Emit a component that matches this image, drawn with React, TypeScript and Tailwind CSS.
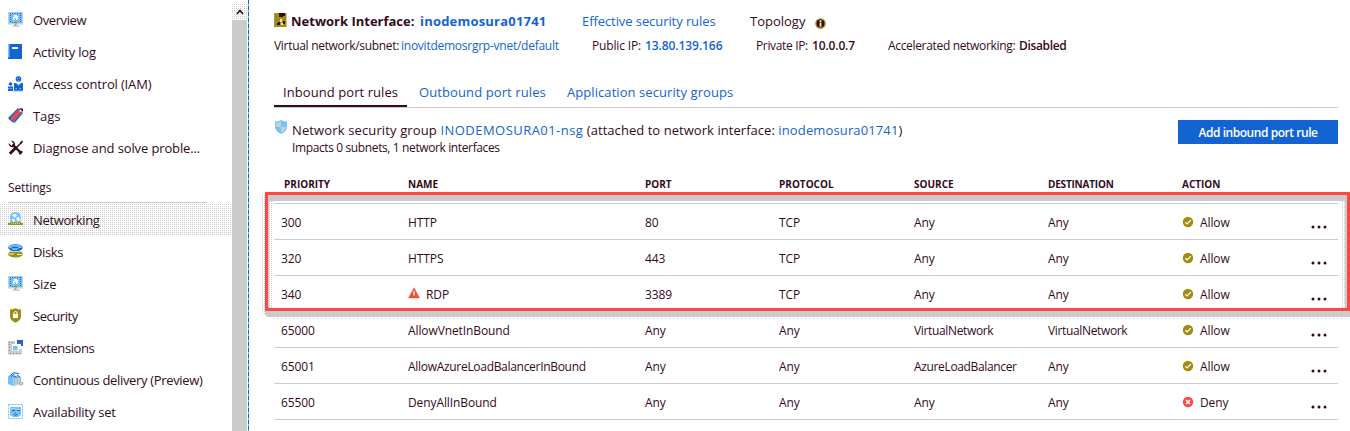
import type { ReactNode } from "react";

const BLUE = "#1264d3";
const SKY = "#70c4fb";
const OLIVE = "#a18c14";
const GREY = "#cccccc";
const INK = "#330a1c";
const RED = "#fb4a42";

function Glyph({ children, className = "" }: { children: ReactNode; className?: string }) {
  return (
    <svg viewBox="0 0 16 16" className={`h-4 w-4 shrink-0 ${className}`} fill="none">
      {children}
    </svg>
  );
}

function MonitorIcon() {
  return (
    <Glyph>
      <path d="M0 0h15v12.500H9.500v1h2V15h-7v-1.500h2v-1H0z" fill={GREY} />
      <path d="M1 1h13v10H1z" fill={SKY} />
      <path d="M2.500 1v10M12.500 1v10" stroke={BLUE} strokeDasharray="1 1" />
      <path d="M4 10.500h4M4 1.500h8" stroke={BLUE} strokeDasharray="1 1.5" />
      <path d="M6 3h3v1h1v3H9v1H8V6H6.500v2H5V5h1z" fill="#fff" />
      <path d="M7 9.500h2v2H8v2H6.500v-1H8v-1H7z" fill={OLIVE} />
    </Glyph>
  );
}

function BookIcon() {
  return (
    <Glyph>
      <path d="M1 0h13v15H0V13h1z" fill={BLUE} />
      <path d="M4 3h6v2H4z" fill="#fff" />
      <path d="M0 0h1.500v13.500H0z" fill={SKY} />
    </Glyph>
  );
}

function PeopleIcon() {
  return (
    <Glyph>
      <circle cx="10.5" cy="3" r="2.8" fill={BLUE} />
      <path d="M9 2h1v1H9zM11 2h1v1h-1zM10 4h1v1h-1z" fill={SKY} />
      <circle cx="2.500" cy="8" r="1.8" fill={BLUE} />
      <path d="M0 10.500h5V15H0z" fill={BLUE} />
      <path d="M6 7h2l2.500 2L13 7h2v8H6z" fill={BLUE} />
      <path d="M8 7.200l2.500 2.300L13 7.200M7.500 12.500h2M11.500 12.500h2M0 12.500h5" stroke={SKY} strokeDasharray="1.5 1" />
      <path d="M5 15h10" stroke={SKY} />
    </Glyph>
  );
}

function TagIcon() {
  return (
    <Glyph>
      <path d="M0.500 9.500L9.500 .5h5v5L7 14.500H5L.5 11z" fill={BLUE} />
      <path d="M1.500 10.500L10 1.500h3.500v3L6 13.500z" fill={RED} />
      <path d="M3 9l5 4M5 7l5 4M7 5l5 4M9 3l4 4M2 11L11 2M5 12l8-8" stroke={BLUE} strokeWidth=".8" strokeDasharray="1 1.3" />
      <circle cx="12.500" cy="3" r="1" fill="#fff" />
      <path d="M12.800.8l1.700.2v2" stroke={INK} />
    </Glyph>
  );
}

function ToolsIcon() {
  return (
    <Glyph>
      <path d="M4.500 4.500L13 13" stroke={INK} strokeWidth="2.4" />
      <path d="M0.700 3.100L3.300 5.700H5.600V3.400L3 .8A3.800 3.800 0 0 1 7 5.500L5 7.300A3.800 3.800 0 0 1 .7 3.100z" fill={INK} />
      <path d="M15 12l-3 3-1.500-2 2.500-2.500z" fill={INK} />
      <path d="M1.800 13.700l7-7" stroke={INK} strokeWidth="2.800" />
      <path d="M9 7l4.500-4.500" stroke={INK} strokeWidth="1.400" />
      <path d="M12 2.500l2-2 1.200 1-2 2.300z" fill={INK} />
    </Glyph>
  );
}

function GlobeIcon() {
  return (
    <Glyph>
      <circle cx="7.500" cy="5.500" r="5.500" fill={SKY} />
      <path d="M4 3.500l3-2 2 2-2 2zM8 6.500l3-2 1 3-2 2zM4 7.500l2-1 1 3H5z" fill="#fff" />
      <path d="M2 9.500h2v1h7v-1h2v1.500h2v2H0v-2h2z" fill={OLIVE} />
      <path d="M3 11.500h10" stroke="#e3d98b" strokeDasharray="1 1" />
    </Glyph>
  );
}

function DisksIcon() {
  return (
    <Glyph>
      <ellipse cx="7.500" cy="10" rx="7.400" ry="3.700" fill={OLIVE} />
      <path d="M1 10h5M9 10.500h5" stroke="#fff3ad" />
      <ellipse cx="7.500" cy="3.800" rx="7.300" ry="3.500" fill={BLUE} />
      <path d="M1 4.500V2.700L4 1h7l3 2v1h-3l-2 2H5L3 4z" fill={SKY} />
      <path d="M4 3.500h6" stroke={BLUE} strokeWidth="1.500" />
      <path d="M3 7.600h9" stroke="#fff" strokeWidth=".7" />
      <path d="M5 13.700h5" stroke={GREY} />
    </Glyph>
  );
}

function ShieldLockIcon() {
  return (
    <Glyph>
      <path d="M7.500.3Q10 1.500 13 1.500v6.700q0 4-5.500 6.600-5.500-2.600-5.500-6.600V1.500Q5 1.500 7.500.3z" fill={OLIVE} />
      <path d="M5 6h5v4H5z" fill="#fff" />
      <path d="M6 6.500V5a1.500 1.500 0 0 1 3 0v1.500" stroke="#fff" />
    </Glyph>
  );
}

function ExtensionsIcon() {
  return (
    <Glyph>
      <path d="M0 1h7v3H4v7h7V9h3v5.500H0z" fill={GREY} />
      <path d="M1.500 4v9M1 2.500h5M2 13.500h11" stroke={OLIVE} strokeDasharray="1 2" />
      <path d="M5 6h4.500v4.500H5z" fill={SKY} />
      <path d="M9 0h6v6h-2V4H9z" fill={BLUE} />
      <path d="M11 2h1v1h-1zM13 3h1v1h-1z" fill={RED} />
    </Glyph>
  );
}

function DeliveryIcon() {
  return (
    <Glyph>
      <path d="M0 4.500L5 3l8 2v7l-8 2-5-2z" fill={SKY} />
      <path d="M5 6h8v6l-8 2z" fill={GREY} />
      <path d="M1 4.500L5.500.7 11 1.500M3 4.500l4-3" stroke={BLUE} />
      <path d="M6.500 6v7M9.500 6v6M12.500 6v4" stroke={SKY} />
      <path d="M5.500 4l3 1.500M9 3l3 2" stroke={BLUE} />
      <circle cx="13" cy="11.500" r="1.800" fill={GREY} stroke={OLIVE} strokeDasharray="1 1.2" />
    </Glyph>
  );
}

function AvailabilityIcon() {
  return (
    <Glyph>
      <path d="M.5 .5h14v14H.5z" fill="#fff" stroke={SKY} strokeDasharray="2 1" />
      <path d="M2 3h11v8l-3 2H5l-3-2z" fill={SKY} />
      <path d="M3 4h4v1H3zM8.500 5h4v1h-4z" fill={GREY} />
      <path d="M4 6.500h3M9 6.500h3" stroke={BLUE} />
      <path d="M5.500 10.500q2 1.500 4 0" stroke={BLUE} />
      <path d="M7 8h1v2H7z" fill={OLIVE} />
    </Glyph>
  );
}

const topItems = [
  { icon: <MonitorIcon />, label: "Overview", track: "tracking-[-0.4px]" },
  { icon: <BookIcon />, label: "Activity log", track: "tracking-[-0.16px]" },
  { icon: <PeopleIcon />, label: "Access control (IAM)", track: "tracking-[-0.15px]" },
  { icon: <TagIcon />, label: "Tags", track: "tracking-[-0.1px]" },
  { icon: <ToolsIcon />, label: "Diagnose and solve proble...", track: "tracking-[-0.12px]" },
];

const settingsItems = [
  { icon: <GlobeIcon />, label: "Networking", track: "tracking-[-0.35px]", active: true },
  { icon: <DisksIcon />, label: "Disks", track: "tracking-[-0.35px]" },
  { icon: <MonitorIcon />, label: "Size", track: "tracking-[-0.1px]" },
  { icon: <ShieldLockIcon />, label: "Security", track: "tracking-[-0.45px]" },
  { icon: <ExtensionsIcon />, label: "Extensions", track: "tracking-[-0.4px]" },
  { icon: <DeliveryIcon />, label: "Continuous delivery (Preview)", track: "tracking-[-0.34px]" },
  { icon: <AvailabilityIcon />, label: "Availability set", track: "tracking-[-0.22px]" },
];

function NavItem({ icon, label, track, active }: { icon: ReactNode; label: string; track: string; active?: boolean }) {
  return (
    <li
      className={`flex h-8 items-center gap-[9px] pl-2 ${
        active
          ? "bg-[image:linear-gradient(90deg,transparent_1px,white_1px),linear-gradient(#cccccc_1px,white_1px)] bg-[size:2px_2px]"
          : ""
      }`}
    >
      {icon}
      <span className={`pt-0.5 text-[13px] ${track}`}>{label}</span>
    </li>
  );
}

function Sidebar() {
  return (
    <nav className="w-[232px] shrink-0 overflow-hidden pt-1">
      <ul>
        {topItems.map((item) => (
          <NavItem key={item.label} {...item} />
        ))}
      </ul>
      <div className="ml-2 flex h-[39px] w-[199px] items-center border-b border-[#cccccc] pt-[9px] text-[12px] tracking-[-0.15px]">
        Settings
      </div>
      <ul className="pt-px">
        {settingsItems.map((item) => (
          <NavItem key={item.label} {...item} />
        ))}
      </ul>
    </nav>
  );
}

function ScrollBar() {
  return (
    <div className="mr-px flex w-[15px] shrink-0 flex-col pt-1">
      <div className="flex h-4 items-center justify-center bg-[image:linear-gradient(90deg,transparent_1px,white_1px),linear-gradient(#cccccc_1px,white_1px)] bg-[size:2px_2px]">
        <svg viewBox="0 0 8 6" className="h-1.5 w-2" fill="none">
          <path d="M1 5l3-3.500L7 5" stroke={INK} strokeWidth="1.600" />
        </svg>
      </div>
      <div className="grow bg-[#cbcbcb]" />
    </div>
  );
}

type Rule = {
  priority: string;
  name: string;
  port: string;
  protocol: string;
  source: string;
  destination: string;
  allow: boolean;
  warn?: boolean;
};

const rules: Rule[] = [
  { priority: "300", name: "HTTP", port: "80", protocol: "TCP", source: "Any", destination: "Any", allow: true },
  { priority: "320", name: "HTTPS", port: "443", protocol: "TCP", source: "Any", destination: "Any", allow: true },
  { priority: "340", name: "RDP", port: "3389", protocol: "TCP", source: "Any", destination: "Any", allow: true, warn: true },
  { priority: "65000", name: "AllowVnetInBound", port: "Any", protocol: "Any", source: "VirtualNetwork", destination: "VirtualNetwork", allow: true },
  { priority: "65001", name: "AllowAzureLoadBalancerInBound", port: "Any", protocol: "Any", source: "AzureLoadBalancer", destination: "Any", allow: true },
  { priority: "65500", name: "DenyAllInBound", port: "Any", protocol: "Any", source: "Any", destination: "Any", allow: false },
];

const columns = "grid grid-cols-[134px_237px_134px_135px_134px_134px_156px] items-center";

function StatusIcon({ allow }: { allow: boolean }) {
  return (
    <svg viewBox="0 0 12 12" className="mb-0.5 h-3 w-3" fill="none">
      <circle cx="6" cy="6" r="5.200" fill={allow ? OLIVE : RED} />
      {allow ? (
        <path d="M3.300 6.200l1.900 1.800 3.600-3.800" stroke="#fff" strokeWidth="1.200" />
      ) : (
        <path d="M4 4l4 4M8 4l-4 4" stroke="#fff" strokeWidth="1.500" />
      )}
    </svg>
  );
}

function RuleRow({ rule }: { rule: Rule }) {
  const nameTrack = rule.name.length > 20 ? "tracking-[-0.3px]" : "";
  return (
    <div className={`${columns} h-9 border-b border-[#cccccc] pt-[2px] text-[12px] tracking-[-0.1px]`}>
      <span className="pl-[7px]">{rule.priority}</span>
      <span className={`flex items-center ${nameTrack}`}>
        {rule.warn && (
          <svg viewBox="0 0 12 12" className="mr-1.5 mb-[3px] h-3 w-3">
            <path d="M6 .3L12 11.500H0z" fill={RED} />
            <path d="M5.200 4h1.600v4.600H5.200zM0 11h12v1H0z" fill="#ffe9a8" />
          </svg>
        )}
        {rule.name}
      </span>
      <span>{rule.port}</span>
      <span>{rule.protocol}</span>
      <span className={rule.source.length > 3 ? "tracking-[-0.35px]" : ""}>{rule.source}</span>
      <span className={rule.destination.length > 3 ? "tracking-[-0.35px]" : ""}>{rule.destination}</span>
      <span className="flex items-center">
        <StatusIcon allow={rule.allow} />
        <span className="ml-1.5">{rule.allow ? "Allow" : "Deny"}</span>
        <svg viewBox="0 0 16 4" className="mt-2 mr-[11px] ml-auto h-1 w-4" fill={INK}>
          <circle cx="2" cy="2" r="1.500" />
          <circle cx="8" cy="2" r="1.500" />
          <circle cx="14" cy="2" r="1.500" />
        </svg>
      </span>
    </div>
  );
}

function Highlight() {
  return (
    <div className="pointer-events-none absolute top-[192px] left-[265px] h-[119px] w-[1085px] border-[3px] border-[#fb4a42]">
      <div className="absolute inset-x-0 top-0 h-1.5 bg-[#cbcbcb]" />
      <div className="absolute top-[116px] -right-[3px] -left-[3px] h-1.5 rounded-bl-sm bg-[#cbcbcb]" />
      <div className="absolute top-[123px] right-0 left-[5px] h-px bg-[repeating-linear-gradient(90deg,#cccccc_0_1px,transparent_1px_4px)]" />
      <div className="absolute top-0 -left-1.5 h-[120px] w-[3px] bg-[image:linear-gradient(90deg,transparent_1px,white_1px),linear-gradient(#cccccc_1px,white_1px)] bg-[size:2px_2px]" />
      <div className="absolute top-1.5 bottom-0 left-0 w-px bg-[#cccccc]" />
      <div className="absolute top-1.5 bottom-0 left-px w-[3px] bg-[image:linear-gradient(90deg,transparent_1px,white_1px),linear-gradient(#cccccc_1px,white_1px)] bg-[size:2px_2px]" />
      <div className="absolute top-1.5 right-0 bottom-0 w-0.5 bg-[#cccccc]" />
      <div className="absolute top-1.5 right-0.5 bottom-0 w-[3px] bg-[image:linear-gradient(90deg,transparent_1px,white_1px),linear-gradient(#cccccc_1px,white_1px)] bg-[size:2px_2px]" />
    </div>
  );
}

function Main() {
  return (
    <main className="flex w-[1064px] shrink-0 flex-col">
      <div className="flex h-[34px] items-center pt-[10px] text-[13px] whitespace-nowrap">
        <svg viewBox="0 0 13 14" className="mr-1 mb-1 h-3.5 w-[13px] shrink-0">
          <path d="M0 0h12.500v14H0z" fill={OLIVE} />
          <path d="M5 0h6v3H9v1H5zM4 9h2v3H3v-2h1zM9 8h2v3H9z" fill={INK} />
          <path d="M6 6h2v3H6zM7 10h2v2H7z" fill="#f2e9b0" />
          <path d="M0 0v14" stroke={SKY} strokeDasharray="1 1" />
        </svg>
        <span className="w-[129px] shrink-0 font-bold">Network Interface:</span>
        <span className="w-[162px] shrink-0 font-bold tracking-[0.2px] text-[#1264d3]">inodemosura01741</span>
        <span className="w-[168px] shrink-0 tracking-[-0.08px] text-[#1264d3]">Effective security rules</span>
        <span className="w-[65px] shrink-0">Topology</span>
        <svg viewBox="0 0 12 12" className="mt-0.5 h-[11px] w-[11px]">
          <circle cx="6" cy="6" r="5" fill={INK} stroke={OLIVE} strokeWidth="1.500" />
          <path d="M5 2.500h2v2H5zM5 5.200h2v4.300H5z" fill="#f2e9b0" />
        </svg>
      </div>
      <div className="flex h-[22px] items-center pt-0.5 text-[12px] tracking-[-0.15px] whitespace-nowrap">
        <span className="w-[127px] shrink-0 tracking-[-0.3px]">Virtual network/subnet:</span>
        <span className="w-[191px] shrink-0 tracking-[-0.25px] text-[#1264d3]">inovitdemosrgrp-vnet/default</span>
        <span className="w-[53px] shrink-0">Public IP:</span>
        <span className="w-[111px] shrink-0 font-semibold tracking-[-0.08px] text-[#1264d3]">13.80.139.166</span>
        <span className="w-[56px] shrink-0 tracking-[-0.35px]">Private IP:</span>
        <span className="w-[76px] shrink-0 font-semibold">10.0.0.7</span>
        <span className="w-[131px] shrink-0 tracking-[-0.33px]">Accelerated networking:</span>
        <span className="font-semibold tracking-[-0.35px]">Disabled</span>
      </div>
      <div className="mt-[22px] flex h-[30px] border-b border-[#cccccc] text-[13px] tracking-[0.07px] text-[#1264d3]">
        <span className="-mb-px h-[29px] w-[133px] border-b-2 border-[#330a1c] pt-[5px] pl-[9px] text-[#330a1c]">Inbound port rules</span>
        <span className="w-[148px] pt-[5px] pl-3 tracking-[0.1px]">Outbound port rules</span>
        <span className="pt-[5px] pl-3">Application security groups</span>
      </div>
      <div className="flex h-[62px] pt-3">
        <svg viewBox="0 0 12 14" className="mr-[5px] ml-px h-3.5 w-3">
          <path d="M6 0q2.500 1.600 6 1.600v5.400q0 4-6 7-6-3-6-7V1.600Q3.500 1.600 6 0z" fill={SKY} />
          <path d="M6 1v6H1V2.500Q4 2.500 6 1zM6 7h5q0 3-5 6z" fill={GREY} />
        </svg>
        <div className="grow">
          <p className="text-[13px] leading-5">
            <span className="tracking-[0.13px]">Network security group </span>
            <span className="tracking-[0.46px] text-[#1264d3]">INODEMOSURA01-nsg</span>
            <span className="tracking-[0.05px]"> (attached to network interface: </span>
            <span className="tracking-[0.13px] text-[#1264d3]">inodemosura01741</span>)
          </p>
          <p className="text-[12px] leading-4 tracking-[-0.38px]">Impacts 0 subnets, 1 network interfaces</p>
        </div>
        <button className="h-6 w-[160px] shrink-0 bg-[#1264d3] pt-0.5 text-[12px] font-semibold tracking-[-0.45px] text-white">
          Add inbound port rule
        </button>
      </div>
      <div className={`${columns} h-[34px] border-b border-[#cccccc] pb-[5px] text-[10px] font-bold`}>
        <span className="pl-2.5">PRIORITY</span>
        <span>NAME</span>
        <span>PORT</span>
        <span>PROTOCOL</span>
        <span>SOURCE</span>
        <span className="tracking-[-0.2px]">DESTINATION</span>
        <span>ACTION</span>
      </div>
      {rules.map((rule) => (
        <RuleRow key={rule.priority} rule={rule} />
      ))}
    </main>
  );
}

export default function App() {
  return (
    <div className="relative flex h-[431px] w-[1350px] overflow-hidden bg-white font-['Open_Sans','Noto_Sans',sans-serif] text-[#330a1c]">
      <Sidebar />
      <ScrollBar />
      <div className="mr-[25px] w-px shrink-0 bg-[repeating-linear-gradient(180deg,#1264d3_0_4px,#70c4fb_4px_6px)]" />
      <Main />
      <Highlight />
    </div>
  );
}
